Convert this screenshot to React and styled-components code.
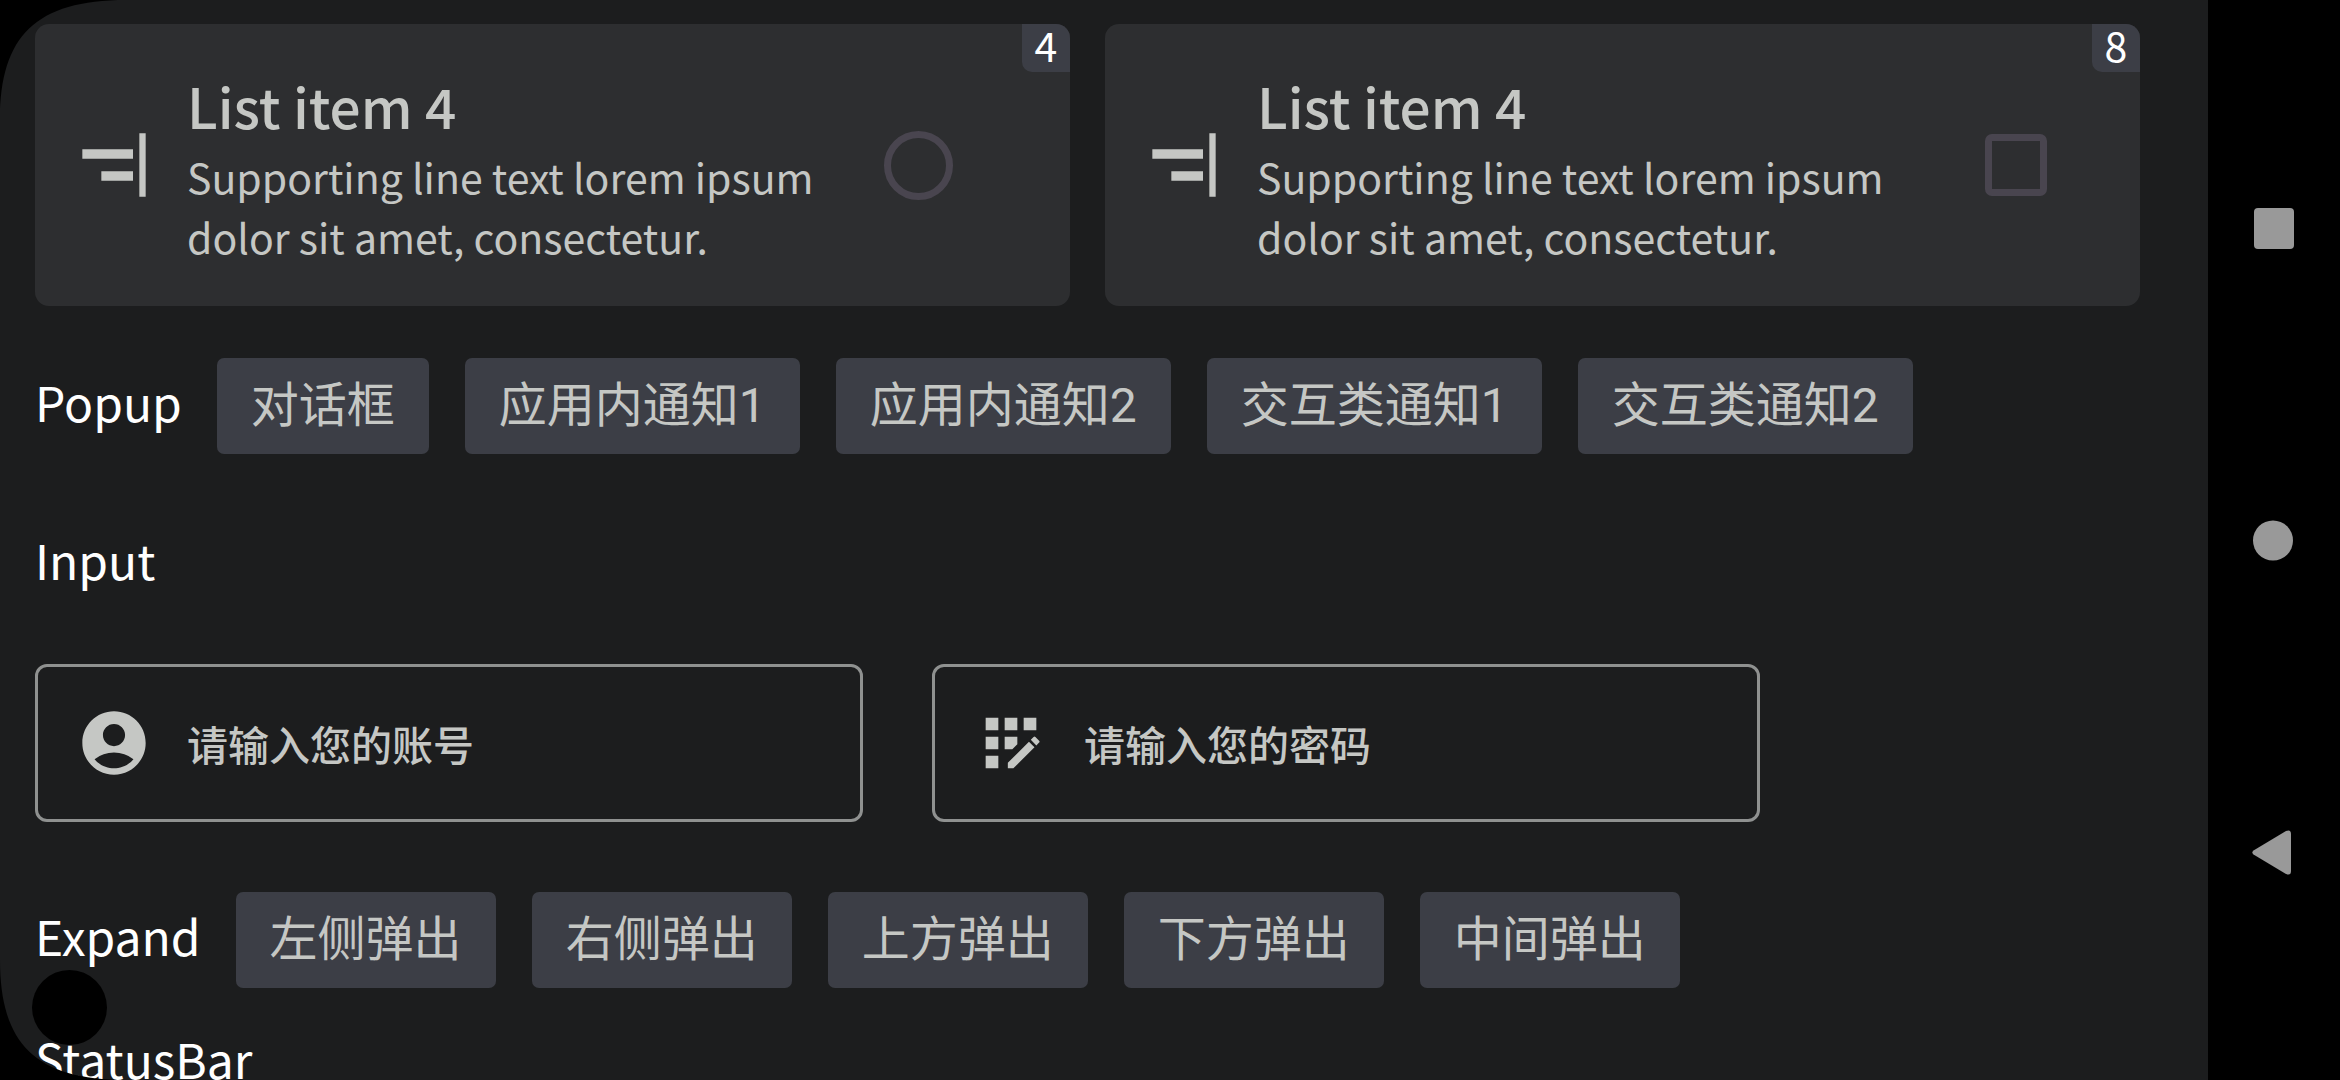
import React from "react";
import styled, { createGlobalStyle } from "styled-components";
import {
  MdAccountCircle,
  MdAlignHorizontalRight,
  MdAppRegistration,
} from "react-icons/md";

const color = {
  background: "#1c1d1e",
  card: "#2d2e30",
  tonal: "#3c3e46",
  content: "#c5c7c4",
  outline: "#8f9190",
  control: "#49454f",
  nav: "#999999",
};

const textFont = '"Noto Sans CJK SC", sans-serif';
const buttonFont = 'Roboto, "Noto Sans CJK SC", sans-serif';

const GlobalStyle = createGlobalStyle`
  *, *::before, *::after { box-sizing: border-box; }
  body { margin: 0; background: #000; overflow: hidden; }
`;

const Device = styled.div`
  display: grid;
  grid-template-columns: minmax(0, 1fr) 132px;
  height: 100vh;
  font-family: ${textFont};
  background: #000;
`;

const Screen = styled.main`
  padding: 24px 68px 0 35px;
  overflow: hidden;
  background: ${color.background};
  color: #fff;
`;

const CardGrid = styled.section`
  display: grid;
  grid-template-columns: 1fr 1fr;
  gap: 35px;
  margin-bottom: 52px;
`;

const Card = styled.label`
  position: relative;
  display: flex;
  align-items: center;
  gap: 35px;
  padding: 40px ${(p) => p.$endSpace}px 40px 41px;
  border-radius: 14px;
  background: ${color.card};
  color: ${color.content};
`;

const IconSlot = styled.span`
  display: flex;
  flex: none;
  font-size: 76px;
  color: ${color.content};
`;

const CardText = styled.span`
  flex: 1;
  min-width: 0;
`;

const CardTitle = styled.span`
  display: block;
  font-size: 55px;
  font-weight: 500;
  line-height: 82px;
`;

const CardBody = styled.span`
  display: block;
  font-size: 41px;
  line-height: 60px;
`;

const Badge = styled.span`
  position: absolute;
  top: 0;
  right: 0;
  min-width: 48px;
  height: 48px;
  border-radius: 0 14px 0 10px;
  background: ${color.tonal};
  color: #fff;
  font-size: 41px;
  line-height: 41px;
  text-align: center;
`;

const Radio = styled.input.attrs({ type: "radio" })`
  appearance: none;
  flex: none;
  width: 69px;
  height: 69px;
  margin: 0;
  border: 7px solid ${color.control};
  border-radius: 50%;
`;

const Checkbox = styled.input.attrs({ type: "checkbox" })`
  appearance: none;
  flex: none;
  width: 62px;
  height: 62px;
  margin: 0;
  border: 7px solid ${color.control};
  border-radius: 7px;
`;

const ActionRow = styled.section`
  display: flex;
  align-items: baseline;
  gap: 35px;
  margin-bottom: ${(p) => p.$space}px;
`;

const ActionGroup = styled.div`
  display: flex;
  gap: 36px;
`;

const Label = styled.h2`
  margin: 0;
  font-size: 48px;
  font-weight: 400;
  line-height: 70px;
`;

const ActionButton = styled.button`
  padding: 0 34px;
  border: 0;
  border-radius: 7px;
  background: ${color.tonal};
  color: ${color.content};
  font-family: ${buttonFont};
  font-size: 48px;
  line-height: 96px;
  white-space: nowrap;
`;

const FieldRow = styled.div`
  display: flex;
  gap: 69px;
  margin: 70px 0;
`;

const Field = styled.label`
  display: flex;
  align-items: center;
  gap: 35px;
  flex: 0 1 828px;
  height: 158px;
  padding: 0 38px;
  border: 3px solid ${color.outline};
  border-radius: 12px;
`;

const FieldInput = styled.input`
  flex: 1;
  min-width: 0;
  padding: 0;
  border: 0;
  outline: 0;
  background: transparent;
  color: ${color.content};
  font-family: ${textFont};
  font-size: 41px;
  font-weight: 500;
  line-height: 60px;

  &::placeholder {
    color: ${color.content};
    opacity: 1;
  }
`;

const NavBar = styled.nav`
  display: flex;
  flex-direction: column;
  align-items: center;
  justify-content: space-between;
  padding: 188px 0;
`;

const NavButton = styled.button`
  display: flex;
  align-items: center;
  justify-content: center;
  width: 80px;
  height: 80px;
  padding: 0;
  border: 0;
  background: transparent;
  color: ${color.nav};
`;

const Cutout = styled.div`
  position: fixed;
  left: 0;
  ${(p) => p.$edge}: 0;
  display: flex;
  pointer-events: none;
`;

const CameraHole = styled.div`
  position: fixed;
  left: 32px;
  bottom: 35px;
  width: 75px;
  height: 75px;
  border-radius: 50%;
  background: #000;
  pointer-events: none;
`;

const popupActions = ["对话框", "应用内通知1", "应用内通知2", "交互类通知1", "交互类通知2"];
const expandActions = ["左侧弹出", "右侧弹出", "上方弹出", "下方弹出", "中间弹出"];

function ListCard({ count, endSpace, children }) {
  return (
    <Card $endSpace={endSpace}>
      <IconSlot>
        <MdAlignHorizontalRight />
      </IconSlot>
      <CardText>
        <CardTitle>List item 4</CardTitle>
        <CardBody>Supporting line text lorem ipsum dolor sit amet, consectetur.</CardBody>
      </CardText>
      {children}
      <Badge>{count}</Badge>
    </Card>
  );
}

function Actions({ title, items, space }) {
  return (
    <ActionRow $space={space}>
      <Label>{title}</Label>
      <ActionGroup>
        {items.map((item) => (
          <ActionButton key={item} type="button">
            {item}
          </ActionButton>
        ))}
      </ActionGroup>
    </ActionRow>
  );
}

export default function App() {
  return (
    <>
      <GlobalStyle />
      <Device>
        <Screen>
          <CardGrid>
            <ListCard count={4} endSpace={117}>
              <Radio name="single" />
            </ListCard>
            <ListCard count={8} endSpace={93}>
              <Checkbox name="multiple" />
            </ListCard>
          </CardGrid>

          <Actions title="Popup" items={popupActions} space={70} />

          <Label>Input</Label>
          <FieldRow>
            <Field>
              <IconSlot>
                <MdAccountCircle />
              </IconSlot>
              <FieldInput type="text" aria-label="账号" placeholder="请输入您的账号" />
            </Field>
            <Field>
              <IconSlot>
                <MdAppRegistration />
              </IconSlot>
              <FieldInput type="password" aria-label="密码" placeholder="请输入您的密码" />
            </Field>
          </FieldRow>

          <Actions title="Expand" items={expandActions} space={35} />

          <Label>StatusBar</Label>
        </Screen>

        <NavBar>
          <NavButton type="button" aria-label="Recents">
            <svg width="40" height="41" viewBox="0 0 40 41" fill="currentColor">
              <rect width="40" height="41" rx="4" />
            </svg>
          </NavButton>
          <NavButton type="button" aria-label="Home">
            <svg width="42" height="41" viewBox="0 0 42 41" fill="currentColor">
              <circle cx="20" cy="20.5" r="20" />
            </svg>
          </NavButton>
          <NavButton type="button" aria-label="Back">
            <svg width="44" height="45" viewBox="0 0 44 45" fill="currentColor">
              <path d="M1.5 20.5 34 1Q39 -1 39 4V41Q39 46 34 44L1.500 24.500Q-.8 22.500 1.500 20.500Z" />
            </svg>
          </NavButton>
        </NavBar>
      </Device>

      <Cutout $edge="top">
        <svg width="126" height="120" viewBox="0 0 126 120">
          <path d="M0 0H126C36 0 0 36 0 120Z" />
        </svg>
      </Cutout>
      <Cutout $edge="bottom">
        <svg width="126" height="120" viewBox="0 0 126 120">
          <path d="M0 120H126C36 120 0 84 0 0Z" />
        </svg>
      </Cutout>
      <CameraHole />
    </>
  );
}
